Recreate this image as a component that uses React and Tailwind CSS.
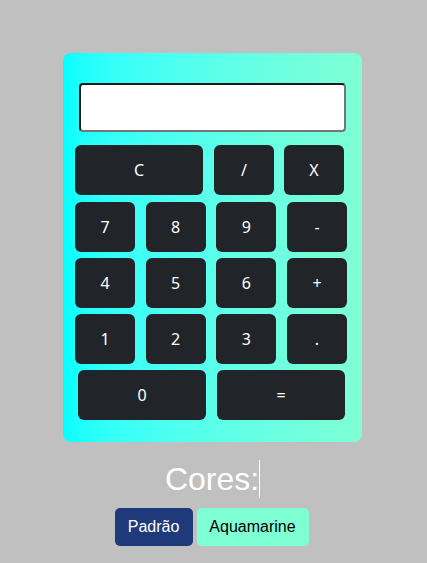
import React from 'react';

const keyClass =
  'h-[50px] rounded-md bg-[#212529] text-white text-[16px] flex items-center justify-center';

const Key = ({ label, wide }) => (
  <button className={`${keyClass} ${wide ? 'w-[128px]' : 'w-[60px]'}`}>{label}</button>
);

const App = () => {
  return (
    <div
      className="min-h-[563px] w-full bg-[#c0c0c0] flex flex-col items-center pt-[53px]"
      style={{ fontFamily: '"Noto Sans", "Open Sans", sans-serif' }}
    >
      {/* calculator body */}
      <div className="mr-[2px] w-[299px] h-[389px] rounded-lg bg-linear-to-r from-[#00ffff] to-[#7fffd4] pt-[30px]">
        <div className="ml-[16px] w-[267px] h-[49px] bg-white rounded border-2 border-t-[#1a1a1a] border-l-[#1a1a1a] border-b-[#767676] border-r-[#767676]" />

        <div className="mt-[13px] ml-[12px] flex">
          <Key label="C" wide />
          <div className="ml-[11px]"><Key label="/" /></div>
          <div className="ml-[10px]"><Key label="X" /></div>
        </div>

        <div className="mt-[7px] ml-[12px] w-[272px] flex justify-between">
          <Key label="7" />
          <Key label="8" />
          <Key label="9" />
          <Key label="-" />
        </div>
        <div className="mt-[6px] ml-[12px] w-[272px] flex justify-between">
          <Key label="4" />
          <Key label="5" />
          <Key label="6" />
          <Key label="+" />
        </div>
        <div className="mt-[6px] ml-[12px] w-[272px] flex justify-between">
          <Key label="1" />
          <Key label="2" />
          <Key label="3" />
          <Key label="." />
        </div>

        <div className="mt-[6px] ml-[15px] flex gap-[11px]">
          <Key label="0" wide />
          <Key label="=" wide />
        </div>
      </div>

      {/* theme picker */}
      <div
        className="mt-[17px] mr-[2px] flex items-center text-white text-[32px] leading-[40px]"
        style={{ fontFamily: '"Liberation Sans", Arial, sans-serif' }}
      >
        <span>Cores:</span>
        <span className="w-px h-[38px] bg-white" />
      </div>

      <div
        className="mt-[9px] mr-[4px] flex gap-[4px] text-[16px]"
        style={{ fontFamily: '"Liberation Sans", Arial, sans-serif' }}
      >
        <button className="w-[78px] h-[38px] rounded-[5px] bg-[#1e3a7a] text-white">Padrão</button>
        <button className="w-[112px] h-[38px] rounded-[5px] bg-[#7fffd4] text-black">Aquamarine</button>
      </div>
    </div>
  );
};

export default App;
